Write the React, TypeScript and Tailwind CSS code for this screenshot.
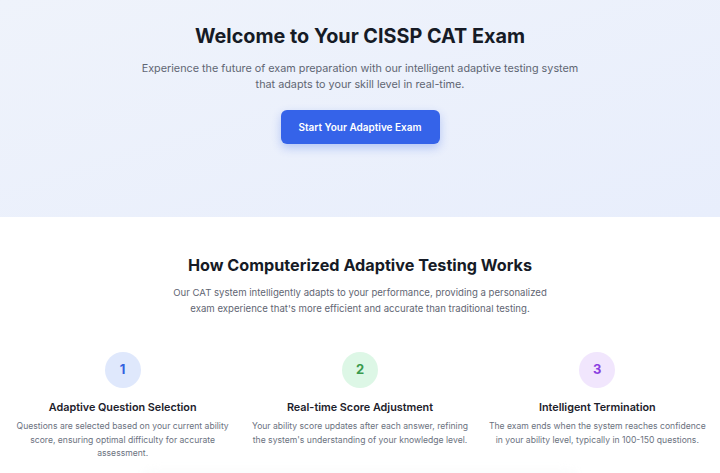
import React from "react";

const steps = [
  {
    n: "1",
    title: "Adaptive Question Selection",
    body: "Questions are selected based on your current ability score, ensuring optimal difficulty for accurate assessment.",
    circle: "bg-[#dfe8fc] text-[#3461e0]",
  },
  {
    n: "2",
    title: "Real-time Score Adjustment",
    body: "Your ability score updates after each answer, refining the system's understanding of your knowledge level.",
    circle: "bg-[#ddf7e6] text-[#3a9a4e]",
  },
  {
    n: "3",
    title: "Intelligent Termination",
    body: "The exam ends when the system reaches confidence in your ability level, typically in 100-150 questions.",
    circle: "bg-[#f1e6fd] text-[#8a3ee0]",
  },
];

export default function App() {
  return (
    <div className="w-[720px] h-[473px] overflow-hidden bg-white font-['Inter',sans-serif]">
      <section className="h-[217px] bg-gradient-to-br from-[#eff3fb] to-[#e8eefc] flex flex-col items-center pt-[22px]">
        <h1 className="text-[19.8px] leading-[28px] font-bold text-[#161b26]">
          Welcome to Your CISSP CAT Exam
        </h1>
        <p className="mt-[11px] w-[440px] text-center text-[10.8px] leading-[16px] text-[#5f6673]">
          Experience the future of exam preparation with our intelligent adaptive testing system that adapts to your skill level in real-time.
        </p>
        <button className="mt-[17px] w-[159px] h-[34px] rounded-md bg-[#3563e9] text-white text-[10px] font-semibold shadow-[0_4px_10px_rgba(53,99,233,0.3)]">
          Start Your Adaptive Exam
        </button>
      </section>
      <section className="flex flex-col items-center pt-[37px] px-3">
        <h2 className="text-[16.2px] leading-[22px] font-bold text-[#161b26]">
          How Computerized Adaptive Testing Works
        </h2>
        <p className="mt-[9px] w-[390px] text-center text-[9.6px] leading-[16px] text-[#5f6673]">
          Our CAT system intelligently adapts to your performance, providing a personalized exam experience that's more efficient and accurate than traditional testing.
        </p>
        <div className="mt-[35px] w-full grid grid-cols-3 gap-4">
          {steps.map((s) => (
            <div key={s.n} className="flex flex-col items-center text-center">
              <div className={`w-[36px] h-[36px] rounded-full flex items-center justify-center text-[13px] font-bold ${s.circle}`}>
                {s.n}
              </div>
              <h3 className="mt-[12px] text-[10.8px] leading-[16px] font-semibold text-[#1c212b]">{s.title}</h3>
              <p className="mt-[4px] text-[8.6px] leading-[13.5px] text-[#6b7280]">{s.body}</p>
            </div>
          ))}
        </div>
        <div className="mt-[4px] w-[440px] h-[30px] rounded-t-2xl bg-gradient-to-b from-[#ffffff] to-[#f4f5f7] blur-[3px]" />
      </section>
    </div>
  );
}
